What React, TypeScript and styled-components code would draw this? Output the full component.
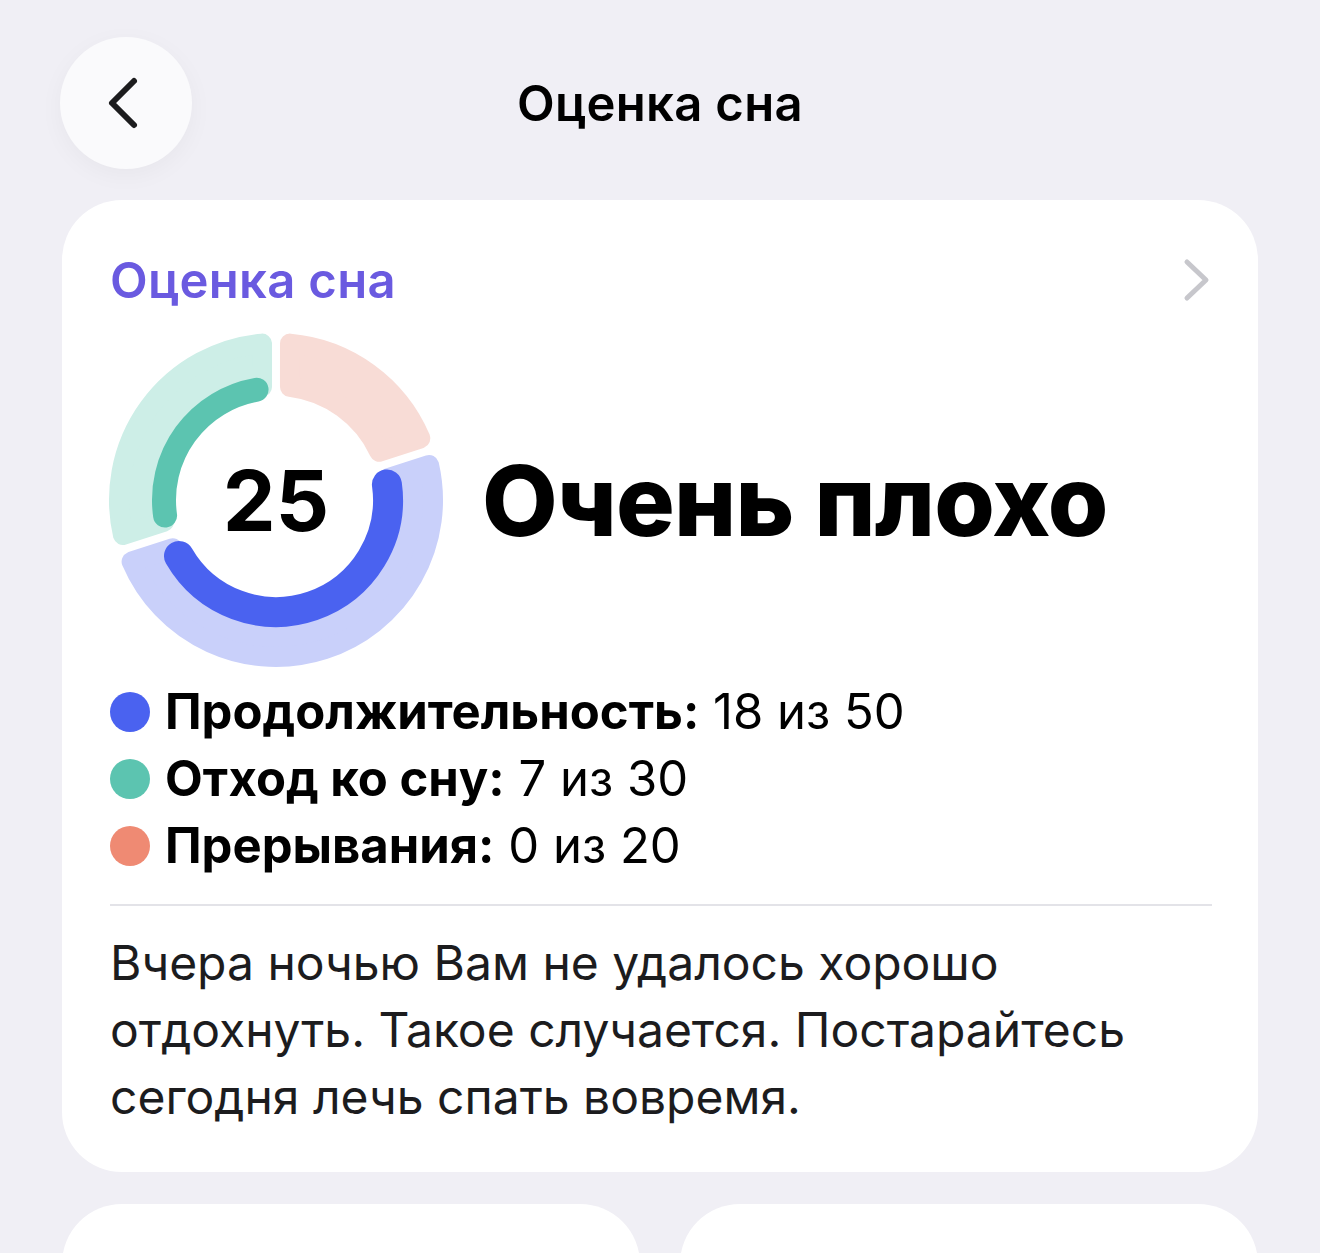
import React from 'react';
import styled, {createGlobalStyle} from 'styled-components';

const GlobalStyle = createGlobalStyle`
  html, body {
    margin: 0;
    padding: 0;
    background: #f0eff5;
    font-family: Inter, "Noto Sans", "Liberation Sans", sans-serif;
    color: #000;
  }
`

type Segment = {
    from: number
    to: number
    light: string
    dark?: string
    darkFrom?: number
    darkTo?: number
    darkWidth?: number
}

const CX = 170
const CY = 170
const R_IN = 104
const R_OUT = 167
const ROUND = 10
const GAP = 4

const segments: Segment[] = [
    {from: 0, to: 72, light: '#f8dcd6'},
    {from: 72, to: 252, light: '#c9d0fa', dark: '#4a62f0', darkFrom: 82, darkTo: 240, darkWidth: 30},
    {from: 252, to: 360, light: '#cdeee7', dark: '#5cc4b0', darkFrom: 262, darkTo: 350, darkWidth: 24},
]

const polar = (r: number, deg: number) => {
    const a = (deg * Math.PI) / 180
    return [CX + r * Math.sin(a), CY - r * Math.cos(a)]
}

const toDeg = (len: number, r: number) => (len / r) * 180 / Math.PI

// annular sector, shrunk so that a round stroke gives it soft corners
const sectorPath = (from: number, to: number) => {
    const ro = R_OUT - ROUND
    const ri = R_IN + ROUND
    const dOut = toDeg(GAP + ROUND, ro)
    const dIn = toDeg(GAP + ROUND, ri)
    const [x1, y1] = polar(ro, from + dOut)
    const [x2, y2] = polar(ro, to - dOut)
    const [x3, y3] = polar(ri, to - dIn)
    const [x4, y4] = polar(ri, from + dIn)
    const large = to - from > 180 ? 1 : 0
    return `M${x1} ${y1} A${ro} ${ro} 0 ${large} 1 ${x2} ${y2} L${x3} ${y3} A${ri} ${ri} 0 ${large} 0 ${x4} ${y4} Z`
}

const arcPath = (from: number, to: number, r: number) => {
    const [x1, y1] = polar(r, from)
    const [x2, y2] = polar(r, to)
    const large = to - from > 180 ? 1 : 0
    return `M${x1} ${y1} A${r} ${r} 0 ${large} 1 ${x2} ${y2}`
}

const legend = [
    {color: '#4a62f0', label: 'Продолжительность:', value: '18 из 50'},
    {color: '#5cc4b0', label: 'Отход ко сну:', value: '7 из 30'},
    {color: '#ef8a73', label: 'Прерывания:', value: '0 из 20'},
]

const SleepDonut = () => {
    return (
        <ChartBox>
            <svg width={340} height={340} viewBox="0 0 340 340">
                {segments.map((s, i) => (
                    <path key={'l' + i} d={sectorPath(s.from, s.to)} fill={s.light} stroke={s.light}
                          strokeWidth={ROUND * 2} strokeLinejoin="round"/>
                ))}
                {segments.filter(s => s.dark).map((s, i) => (
                    <path key={'d' + i} d={arcPath(s.darkFrom!, s.darkTo!, 112)} fill="none" stroke={s.dark}
                          strokeWidth={s.darkWidth} strokeLinecap="round"/>
                ))}
            </svg>
            <Score>25</Score>
        </ChartBox>
    )
}

export default function App() {
    return (
        <Page>
            <GlobalStyle/>
            <Header>
                <BackButton aria-label="Назад">
                    <svg width="40" height="60" viewBox="0 0 40 60">
                        <path d="M31 8 L9 30 L31 52" fill="none" stroke="#1c1c1e" strokeWidth="6"
                              strokeLinecap="round" strokeLinejoin="round"/>
                    </svg>
                </BackButton>
                <HeaderTitle>Оценка сна</HeaderTitle>
                <span/>
            </Header>

            <Card>
                <CardHead>
                    <CardTitle>Оценка сна</CardTitle>
                    <svg width="30" height="46" viewBox="0 0 30 46">
                        <path d="M5 5 L24 23 L5 41" fill="none" stroke="#c7c7cc" strokeWidth="5"
                              strokeLinecap="round" strokeLinejoin="round"/>
                    </svg>
                </CardHead>

                <ChartRow>
                    <SleepDonut/>
                    <Verdict>Очень плохо</Verdict>
                </ChartRow>

                <Legend>
                    {legend.map(l => (
                        <LegendRow key={l.label}>
                            <Dot color={l.color}/>
                            <LegendText><b>{l.label}</b> {l.value}</LegendText>
                        </LegendRow>
                    ))}
                </Legend>

                <Divider/>

                <Note>
                    Вчера ночью Вам не удалось хорошо отдохнуть. Такое случается. Постарайтесь
                    сегодня лечь спать вовремя.
                </Note>
            </Card>

            <BottomRow>
                <SmallCard/>
                <SmallCard/>
            </BottomRow>
        </Page>
    )
}

const Page = styled.div`
  width: 1320px;
  height: 1253px;
  overflow: hidden;
  background: #f0eff5;
`

const Header = styled.div`
  display: grid;
  grid-template-columns: 1fr auto 1fr;
  align-items: center;
  padding: 37px 60px 31px;
`

const BackButton = styled.button`
  width: 132px;
  height: 132px;
  border-radius: 50%;
  border: none;
  background: #fafafc;
  box-shadow: 0 6px 24px rgba(0, 0, 0, 0.04);
  display: flex;
  align-items: center;
  justify-content: center;
  padding: 0 6px 0 0;
  justify-self: start;
`

const HeaderTitle = styled.div`
  font-size: 49px;
  font-weight: 600;
  letter-spacing: 0.3px;
  color: #000;
`

const Card = styled.div`
  margin: 0 62px;
  background: #fff;
  border-radius: 60px;
  padding: 52px 46px 42px 48px;
`

const CardHead = styled.div`
  display: flex;
  align-items: center;
  justify-content: space-between;
  height: 56px;
`

const CardTitle = styled.div`
  font-size: 49px;
  font-weight: 600;
  color: #6a5ae0;
  letter-spacing: 0.3px;
`

const ChartRow = styled.div`
  display: flex;
  align-items: center;
  gap: 36px;
  margin: 22px 0 0 -4px;
`

const ChartBox = styled.div`
  position: relative;
  width: 340px;
  height: 340px;
  flex-shrink: 0;
`

const Score = styled.div`
  position: absolute;
  inset: 0;
  display: flex;
  align-items: center;
  justify-content: center;
  font-size: 84px;
  font-weight: 700;
  letter-spacing: 0;
`

const Verdict = styled.div`
  font-size: 98px;
  font-weight: 800;
  letter-spacing: -0.8px;
`

const Legend = styled.div`
  margin-top: 8px;
  display: flex;
  flex-direction: column;
`

const LegendRow = styled.div`
  display: flex;
  align-items: center;
  gap: 15px;
  height: 67px;
`

const Dot = styled.span`
  width: 40px;
  height: 40px;
  border-radius: 50%;
  background: ${props => props.color};
  flex-shrink: 0;
`

const LegendText = styled.div`
  font-size: 49px;
  letter-spacing: 0;

  b {
    font-weight: 700;
  }
`

const Divider = styled.div`
  height: 2px;
  background: #e3e3e8;
  margin: 25px 0 23px;
`

const Note = styled.div`
  font-size: 48px;
  line-height: 67px;
  color: #1c1c1e;
  letter-spacing: 0;
  max-width: 1080px;
`

const BottomRow = styled.div`
  display: grid;
  grid-template-columns: 1fr 1fr;
  gap: 40px;
  margin: 32px 62px 0;
`

const SmallCard = styled.div`
  height: 200px;
  background: #fff;
  border-radius: 60px;
`
